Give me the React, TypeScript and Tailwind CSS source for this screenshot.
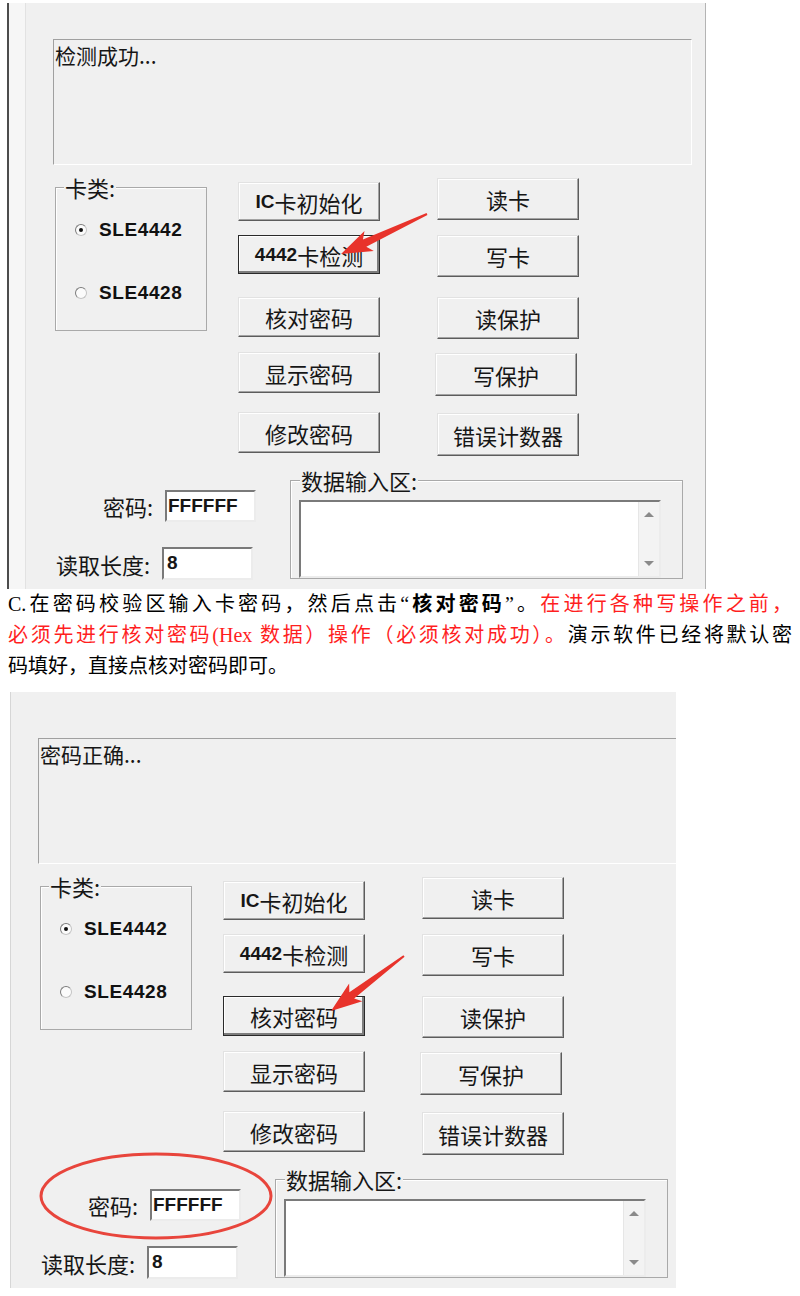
import React from 'react';

type BtnSpec = { label: React.ReactNode; cls: string; id?: string };

const Latin = ({ children }: { children: React.ReactNode }) => (
  <span className="font-['Liberation_Sans',Arial,sans-serif] font-bold text-[19px]">{children}</span>
);

const leftButtons: BtnSpec[] = [
  { label: <><Latin>IC</Latin>卡初始化</>, cls: 'mt-[5px] h-[39px]' },
  { label: <><Latin>4442</Latin>卡检测</>, cls: 'mt-[14px] h-[39px]', id: 'detect' },
  { label: '核对密码', cls: 'mt-[23px] h-[40px]', id: 'verify' },
  { label: '显示密码', cls: 'mt-[15px] h-[41px]' },
  { label: '修改密码', cls: 'mt-[19px] h-[41px]' },
];

const rightButtons: BtnSpec[] = [
  { label: '读卡', cls: 'mt-[1px] h-[42px]' },
  { label: '写卡', cls: 'mt-[15px] h-[42px]' },
  { label: '读保护', cls: 'mt-[20px] h-[42px]' },
  { label: '写保护', cls: 'mt-[14px] h-[43px] -ml-[2px]' },
  { label: '错误计数器', cls: 'mt-[17px] h-[43px]' },
];

const WinButton = ({ spec, pressed }: { spec: BtnSpec; pressed: boolean }) => (
  <div
    className={`${spec.cls} w-[142px] shrink-0 flex items-center justify-center bg-[#f0f0f0] text-[22px] leading-none text-[#161616] border ${
      pressed
        ? 'border-[#2a2a2a] shadow-[inset_-2px_-2px_0_#7d7d7d,inset_1px_1px_0_#ffffff]'
        : 'border-t-[#e2e2e2] border-l-[#e2e2e2] border-r-[#5c5c5c] border-b-[#5c5c5c] shadow-[inset_-1px_-1px_0_#a3a3a3,inset_1px_1px_0_#ffffff]'
    }`}
  >
    {spec.label}
  </div>
);

const Radio = ({ checked, label, cls }: { checked: boolean; label: string; cls: string }) => (
  <div className={`${cls} flex items-center h-[24px] pl-[19px] gap-[12px]`}>
    <div className="w-[12px] h-[12px] rounded-full bg-[#fbfbfb] border border-[#c4c4c4] border-t-[#7c7c7c] border-l-[#7c7c7c] flex items-center justify-center">
      {checked && <div className="w-[4px] h-[4px] rounded-full bg-[#111]" />}
    </div>
    <span className="font-['Liberation_Sans',Arial,sans-serif] font-bold text-[19px] tracking-[0.6px] text-[#111]">
      {label}
    </span>
  </div>
);

const Sunken = ({ cls, children }: { cls: string; children?: React.ReactNode }) => (
  <div
    className={`${cls} bg-white border-2 border-t-[#7a7a7a] border-l-[#7a7a7a] border-r-[#ececec] border-b-[#ececec]`}
  >
    {children}
  </div>
);

const Dialog = ({ status, pressed, cls }: { status: string; pressed: string; cls: string }) => (
  <div className={`${cls} font-['Noto_Sans_CJK_SC',sans-serif] text-[#161616]`}>
    {/* status output */}
    <div className="w-[639px] h-[126px] shrink-0 border border-t-[#a0a0a0] border-l-[#a0a0a0] border-r-white border-b-white pl-[1px] pt-[3px] text-[21px] leading-[24px]">
      {status}
    </div>

    <div className="flex mt-[12px]">
      {/* card type group */}
      <div className="ml-[2px] mt-[10px] w-[152px] h-[144px] shrink-0 border border-[#a9a9a9] shadow-[inset_1px_1px_0_#ffffff]">
        <span className="block w-fit -mt-[12px] ml-[8px] px-[1px] bg-[#f0f0f0] text-[22px] leading-[22px]">卡类:</span>
        <Radio checked label="SLE4442" cls="mt-[20px]" />
        <Radio checked={false} label="SLE4428" cls="mt-[39px]" />
      </div>

      <div className="ml-[31px] flex flex-col">
        {leftButtons.map((b, i) => (
          <WinButton key={i} spec={b} pressed={b.id === pressed} />
        ))}
      </div>

      <div className="ml-[57px] flex flex-col">
        {rightButtons.map((b, i) => (
          <WinButton key={i} spec={b} pressed={false} />
        ))}
      </div>
    </div>

    <div className="flex mt-[13px]">
      <div className="w-[203px] shrink-0 flex flex-col">
        <div className="mt-[21px] flex items-center gap-[12px]">
          <span className="w-[100px] text-right text-[22px] leading-none">密码:</span>
          <Sunken cls="w-[91px] h-[32px] pl-[1px] flex items-center">
            <Latin>FFFFFF</Latin>
          </Sunken>
        </div>
        <div className="mt-[25px] flex items-center gap-[12px]">
          <span className="w-[97px] text-right text-[22px] leading-none">读取长度:</span>
          <Sunken cls="w-[91px] h-[33px] pl-[3px] flex items-center">
            <Latin>8</Latin>
          </Sunken>
        </div>
      </div>

      {/* data input group */}
      <div className="ml-[34px] mt-[11px] w-[393px] h-[99px] shrink-0 border border-[#a9a9a9] shadow-[inset_1px_1px_0_#ffffff]">
        <span className="block w-fit -mt-[12px] ml-[9px] px-[1px] bg-[#f0f0f0] text-[22px] leading-[22px]">数据输入区:</span>
        <Sunken cls="ml-[8px] mt-[9px] w-[362px] h-[78px] flex justify-end">
          <div className="w-[21px] h-full bg-[#f3f3f3] border-l border-[#e6e6e6] flex flex-col items-center justify-between py-[10px]">
            <div className="w-0 h-0 border-x-[5px] border-x-transparent border-b-[5px] border-b-[#8a8a8a]" />
            <div className="w-0 h-0 border-x-[5px] border-x-transparent border-t-[5px] border-t-[#8a8a8a]" />
          </div>
        </Sunken>
      </div>
    </div>
  </div>
);

const arrowPts = (L: number) =>
  `0,-1 ${L - 26},-4 ${L - 31},-11 ${L},0 ${L - 31},11 ${L - 26},4 0,1`;

export default function App() {
  return (
    <div className="relative w-[800px] h-[1296px] bg-white overflow-hidden">
      {/* first screenshot */}
      <div className="ml-[7px] mt-[3px] w-[699px] h-[586px] border-l-2 border-l-[#4d4d4d] border-r border-r-[#b4b4b4] bg-[#f0f0f0] overflow-hidden shadow-[inset_16px_0_0_#f6f6f6,inset_17px_0_0_#e2e2e2]">
        <Dialog status="检测成功..." pressed="detect" cls="pl-[44px] pt-[36px]" />
      </div>

      {/* explanation text */}
      <div className="ml-[8px] w-[784px] text-[20px] leading-[31px] font-['Liberation_Serif','Noto_Sans_CJK_SC',serif] text-black">
        <div className="text-justify [text-align-last:justify] whitespace-nowrap">
          C.在密码校验区输入卡密码，然后点击“<b>核对密码</b>”。
          <span className="text-[#ff1f1f]">在进行各种写操作之前，</span>
        </div>
        <div className="text-justify [text-align-last:justify] whitespace-nowrap">
          <span className="text-[#ff1f1f]">必须先进行核对密码(Hex 数据）操作（必须核对成功）。</span>
          演示软件已经将默认密
        </div>
        <div>码填好，直接点核对密码即可。</div>
      </div>

      {/* second screenshot */}
      <div className="ml-[10px] mt-[10px] w-[666px] h-[596px] border-l border-l-[#d6d6d6] bg-[#f0f0f0] overflow-hidden">
        <Dialog status="密码正确..." pressed="verify" cls="pl-[27px] pt-[46px]" />
      </div>

      {/* annotations drawn on top */}
      <svg className="absolute inset-0 pointer-events-none" width="800" height="1296" viewBox="0 0 800 1296">
        <polygon points={arrowPts(94.8)} fill="#e8332b" transform="translate(427 214) rotate(155.06)" />
        <polygon points={arrowPts(91.4)} fill="#e8332b" transform="translate(404 956) rotate(143)" />
        <ellipse cx="156" cy="1196" rx="115" ry="42" fill="none" stroke="#e8453c" strokeWidth="3" />
      </svg>
    </div>
  );
}
